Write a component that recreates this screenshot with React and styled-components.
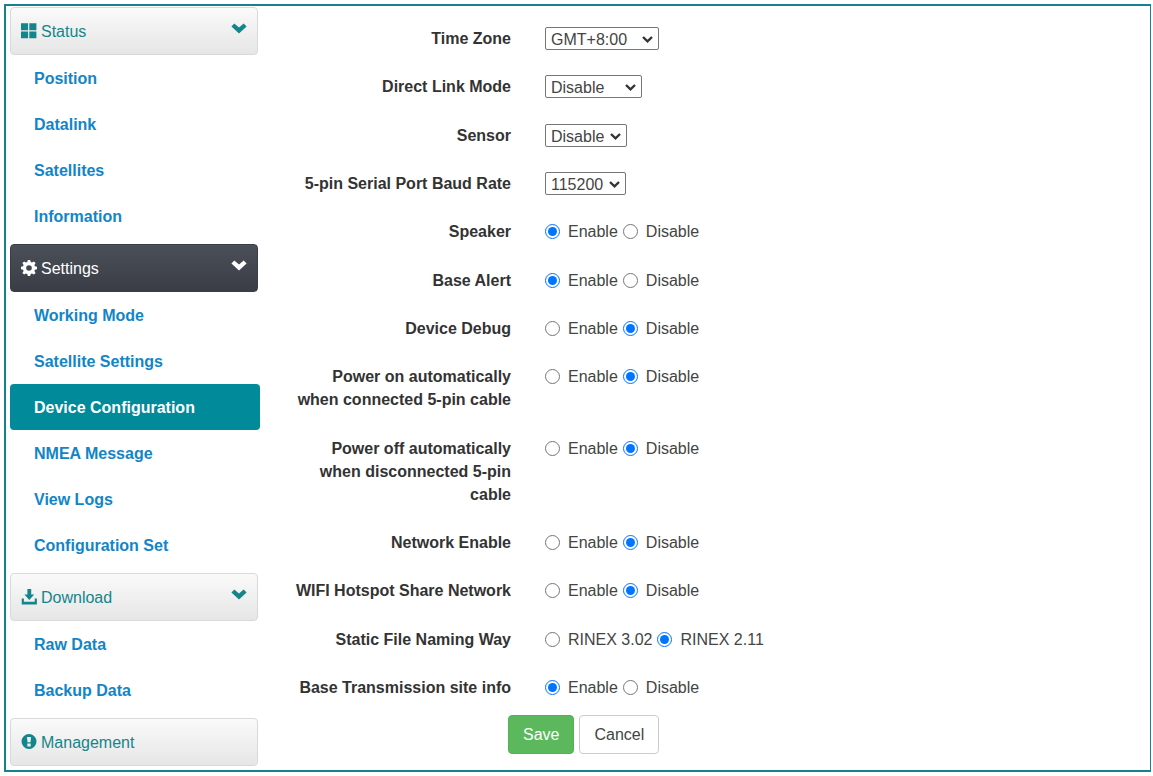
import React from "react";
import styled, { createGlobalStyle, css } from "styled-components";

const menu = [
  {
    title: "Status",
    icon: "grid",
    items: ["Position", "Datalink", "Satellites", "Information"],
  },
  {
    title: "Settings",
    icon: "cog",
    open: true,
    items: [
      "Working Mode",
      "Satellite Settings",
      "Device Configuration",
      "NMEA Message",
      "View Logs",
      "Configuration Set",
    ],
  },
  { title: "Download", icon: "download", items: ["Raw Data", "Backup Data"] },
  { title: "Management", icon: "alert", items: [] },
];

const onOff = ["Enable", "Disable"];

const fields = [
  { id: "timezone", label: "Time Zone", options: ["GMT+8:00", "GMT+9:00"], width: 114 },
  { id: "directLink", label: "Direct Link Mode", options: ["Disable", "Enable"], width: 97 },
  { id: "sensor", label: "Sensor", options: ["Disable", "Enable"], width: 82 },
  { id: "baud", label: "5-pin Serial Port Baud Rate", options: ["115200", "9600"], width: 81 },
  { id: "speaker", label: "Speaker", radios: onOff, value: "Enable" },
  { id: "baseAlert", label: "Base Alert", radios: onOff, value: "Enable" },
  { id: "debug", label: "Device Debug", radios: onOff, value: "Disable" },
  { id: "powerOn", label: "Power on automatically when connected 5-pin cable", radios: onOff, value: "Disable" },
  { id: "powerOff", label: "Power off automatically when disconnected 5-pin cable", radios: onOff, value: "Disable" },
  { id: "network", label: "Network Enable", radios: onOff, value: "Disable" },
  { id: "wifi", label: "WIFI Hotspot Share Network", radios: onOff, value: "Disable" },
  { id: "naming", label: "Static File Naming Way", radios: ["RINEX 3.02", "RINEX 2.11"], value: "RINEX 2.11" },
  { id: "siteInfo", label: "Base Transmission site info", radios: onOff, value: "Enable" },
];

function MenuIcon({ name }) {
  return (
    <Icon viewBox="0 0 16 16" aria-hidden="true">
      {name === "grid" && <path d="M0 0.300h7.100v6.900H0zM8.300 0.300h7.100v6.900H8.300zM0 8.400h7.100v6.900H0zM8.300 8.400h7.100v6.900H8.300z" />}
      {name === "cog" && (
        <path
          fillRule="evenodd"
          d="M6.800 0h2.400l.5 2.100 1.300.5 1.900-1.200 1.700 1.700-1.200 1.900.5 1.300 2.100.5v2.400l-2.100.5-.5 1.300 1.200 1.900-1.700 1.700-1.900-1.200-1.300.5-.5 2.100H6.800l-.5-2.100-1.300-.5-1.900 1.200-1.700-1.700 1.200-1.900-.5-1.300L0 9.200V6.800l2.100-.5.5-1.300-1.200-1.900 1.700-1.700 1.900 1.200 1.300-.5zM8 5.200a2.800 2.800 0 1 0 0 5.600 2.800 2.800 0 0 0 0-5.600z"
        />
      )}
      {name === "download" && <path d="M6.400 0h3.800v5.500h3L8.300 11 3.400 5.500h3zM0.700 9.500h2.200v3.200h10.800V9.500h2.200v6H0.700z" />}
      {name === "alert" && (
        <path
          fillRule="evenodd"
          d="M8 0a7.500 7.500 0 1 0 0 15A7.500 7.500 0 0 0 8 0zM6 3h4l-.5 5.200h-3zM6.300 9.600h3.400v2.800H6.300z"
        />
      )}
    </Icon>
  );
}

function Field({ field }) {
  if (field.options) {
    return (
      <Row>
        <FieldLabel htmlFor={field.id}>{field.label}</FieldLabel>
        <SelectBox $width={field.width}>
          <Select id={field.id}>
            {field.options.map((option) => (
              <option key={option}>{option}</option>
            ))}
          </Select>
          <SelectArrow viewBox="0 0 11 7" aria-hidden="true">
            <path d="M1 1l4.500 4.300L10 1" />
          </SelectArrow>
        </SelectBox>
      </Row>
    );
  }

  return (
    <Row role="radiogroup" aria-labelledby={field.id}>
      <FieldName id={field.id}>{field.label}</FieldName>
      <RadioGroup>
        {field.radios.map((option) => (
          <RadioLabel key={option}>
            <Radio name={field.id} defaultChecked={option === field.value} />
            {option}
          </RadioLabel>
        ))}
      </RadioGroup>
    </Row>
  );
}

export default function App() {
  return (
    <>
      <GlobalStyle />
      <Frame>
        <Sidebar>
          {menu.map((group) => (
            <Group key={group.title}>
              <GroupButton type="button" $open={group.open}>
                <MenuIcon name={group.icon} />
                <GroupTitle>{group.title}</GroupTitle>
                {group.items.length > 0 && (
                  <Chevron viewBox="0 0 16 11" aria-hidden="true">
                    <path d="M3.300 0.500 8 4.500 12.700 0.500 15.600 3.500 8 10.600 0.400 3.500z" />
                  </Chevron>
                )}
              </GroupButton>
              {group.items.map((item) => (
                <MenuLink key={item} href="#" $active={item === "Device Configuration"}>
                  {item}
                </MenuLink>
              ))}
            </Group>
          ))}
        </Sidebar>
        <Form onSubmit={(e) => e.preventDefault()}>
          <Fields>
            {fields.map((field) => (
              <Field key={field.id} field={field} />
            ))}
          </Fields>
          <Actions>
            <Button type="submit" $primary>Save</Button>
            <Button type="reset">Cancel</Button>
          </Actions>
        </Form>
      </Frame>
    </>
  );
}

const GlobalStyle = createGlobalStyle`
  * {
    box-sizing: border-box;
  }

  body {
    margin: 0;
    background: #fff;
    color: #444;
    font-family: "Liberation Sans", Arial, sans-serif;
    font-size: 16px;
    line-height: 23px;
  }
`;

const Frame = styled.div`
  display: flex;
  margin: 4px 2px 4px 4px;
  border: 2px solid #16828c;
  border-right-width: 1px;
`;

const Sidebar = styled.nav`
  display: flex;
  flex-direction: column;
  flex: none;
  gap: 5px;
  width: 254px;
  padding: 1px 0 4px 4px;
`;

const Group = styled.div`
  display: flex;
  flex-direction: column;
`;

const GroupButton = styled.button`
  display: flex;
  align-items: center;
  height: 48px;
  margin-right: 2px;
  padding: 0 10px;
  border: 1px solid #d9d9d9;
  border-radius: 4px;
  background: linear-gradient(#fafafa, #e6e6e6);
  color: #14858a;
  font: inherit;
  text-align: left;

  ${({ $open }) =>
    $open &&
    css`
      border-color: #3a3d45;
      background: linear-gradient(#4a4f58, #3a3d46);
      color: #fff;
    `}
`;

const Icon = styled.svg`
  width: 16px;
  height: 16px;
  margin-right: 4px;
  fill: currentColor;
`;

const GroupTitle = styled.span`
  flex: 1;
`;

const Chevron = styled.svg`
  width: 16px;
  height: 11px;
  margin-bottom: 5px;
  fill: currentColor;
`;

const MenuLink = styled.a`
  padding: 12px 24px 11px;
  border-radius: 4px;
  color: #1285c7;
  font-weight: bold;
  text-decoration: none;

  ${({ $active }) =>
    $active &&
    css`
      background: #008a9a;
      color: #fff;
    `}
`;

const Form = styled.form`
  display: flex;
  flex: 1;
  flex-direction: column;
  padding: 21px 16px 16px 31px;
`;

const Fields = styled.div`
  display: flex;
  flex: 1;
  flex-direction: column;
  justify-content: space-between;
`;

const Row = styled.div`
  display: grid;
  grid-template-columns: 220px 1fr;
  column-gap: 34px;
  align-items: start;
`;

const labelStyle = css`
  color: #333;
  font-weight: bold;
  text-align: right;
`;

const FieldLabel = styled.label`
  ${labelStyle}
`;

const FieldName = styled.span`
  ${labelStyle}
`;

const SelectBox = styled.div`
  position: relative;
  width: ${({ $width }) => $width}px;
  height: 23px;
`;

const Select = styled.select`
  display: block;
  width: 100%;
  height: 100%;
  padding: 0 5px;
  border: 1px solid #767676;
  border-radius: 2px;
  background: #fff;
  color: #444;
  font: inherit;
  appearance: none;
`;

// sits over the right end of the select
const SelectArrow = styled.svg`
  position: absolute;
  top: 9px;
  right: 6px;
  width: 11px;
  height: 7px;
  fill: none;
  stroke: #333;
  stroke-width: 2.4;
  pointer-events: none;
`;

const RadioGroup = styled.div`
  display: flex;
  gap: 5px;
`;

const RadioLabel = styled.label`
  display: flex;
  align-items: center;
  gap: 8px;
`;

const Radio = styled.input.attrs({ type: "radio" })`
  width: 15px;
  height: 15px;
  margin: 0;
`;

const Actions = styled.div`
  display: flex;
  gap: 5px;
  margin: 16px 0 0 217px;
`;

const Button = styled.button`
  height: 39px;
  padding: 0 14px;
  border: 1px solid #ccc;
  border-radius: 4px;
  background: #fff;
  color: #444;
  font: inherit;

  ${({ $primary }) =>
    $primary &&
    css`
      border-color: #55b155;
      background: #5cb85c;
      color: #fff;
    `}
`;
